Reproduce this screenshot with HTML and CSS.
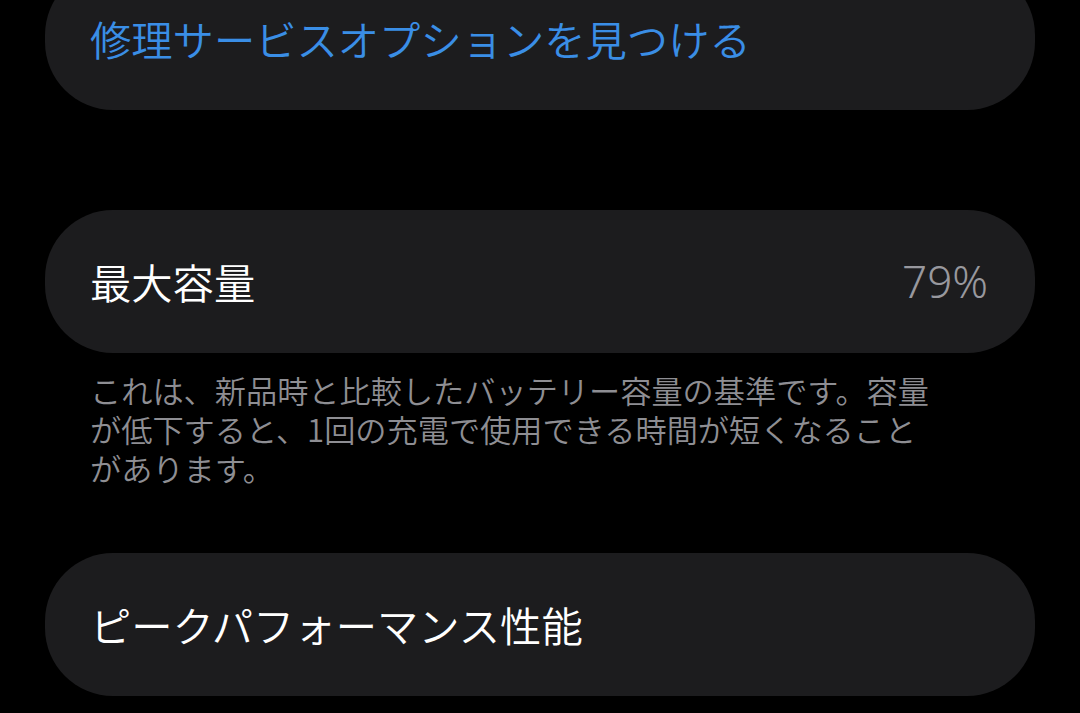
FILE: index.html
```html
<!DOCTYPE html>
<html lang="ja">
<head>
<meta charset="utf-8">
<link rel="stylesheet" href="styles.css">
</head>
<body>
<div class="page">
  <div class="card card-top">
    <span class="link">修理サービスオプションを見つける</span>
  </div>
  <div class="card card-cap">
    <span class="label">最大容量</span>
    <span class="value">79%</span>
  </div>
  <p class="footer">これは、新品時と比較したバッテリー容量の基準です。容量<br>が低下すると、1回の充電で使用できる時間が短くなること<br>があります。</p>
  <div class="card card-peak">
    <span class="label">ピークパフォーマンス性能</span>
  </div>
</div>
</body>
</html>
```

FILE: styles.css
```css
html, body {
  margin: 0;
  padding: 0;
  background: #000;
  height: 100%;
  overflow: hidden;
}
body {
  font-family: "Noto Sans CJK JP", "Noto Sans", sans-serif;
  font-weight: 350;
}
.page {
  display: flex;
  flex-direction: column;
  padding: 0 45px;
}
.card {
  background: #1c1c1e;
  border-radius: 68px;
  height: 143px;
  box-sizing: border-box;
  padding: 0 47px 0 45px;
  display: flex;
  align-items: center;
  justify-content: space-between;
  font-size: 41.3px;
  line-height: 1.2;
}
.card-top {
  margin-top: -33px;
}
.card-cap {
  margin-top: 100px;
}
.link {
  color: #3a8ee6;
}
.label {
  color: #ffffff;
}
.value {
  color: #98989e;
  font-family: "Noto Sans", "Noto Sans CJK JP", sans-serif;
  font-size: 44px;
  font-weight: 300;
}
.footer {
  margin: 17px 0 0;
  padding: 0 45px;
  color: #8e8e93;
  font-size: 31.2px;
  line-height: 39px;
  white-space: nowrap;
}
.card-peak {
  margin-top: 66px;
}
```
